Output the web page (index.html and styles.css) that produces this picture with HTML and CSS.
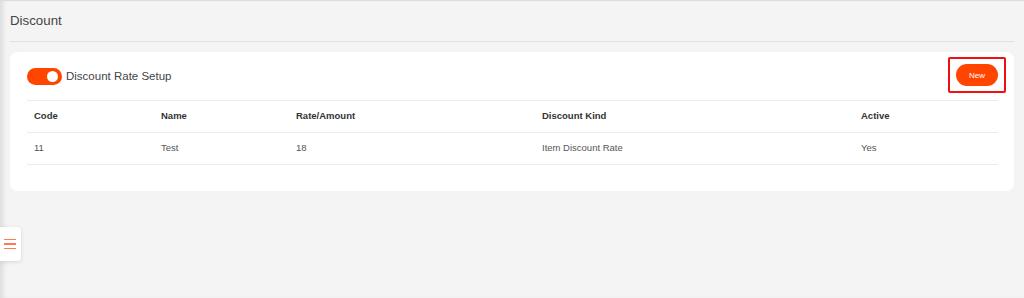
FILE: index.html
```html
<!DOCTYPE html>
<html lang="en">
<head>
  <meta charset="UTF-8">
  <title>Discount</title>
  <link rel="stylesheet" href="styles.css">
</head>
<body>

  <!-- PAGE HEADER -->
  <div class="main">
    <div class="page-title">Discount</div>

    <!-- DISCOUNT CARD -->
    <div class="card">
      <div class="card-head">
        <div class="card-title">
          <span class="toggle"><span class="knob"></span></span>
          Discount Rate Setup
        </div>
        <div class="highlight">
          <button class="btn-new">New</button>
        </div>
      </div>

      <table class="grid">
        <colgroup>
          <col class="c-code">
          <col class="c-name">
          <col class="c-rate">
          <col class="c-kind">
          <col>
        </colgroup>
        <thead>
          <tr>
            <th>Code</th>
            <th>Name</th>
            <th>Rate/Amount</th>
            <th>Discount Kind</th>
            <th>Active</th>
          </tr>
        </thead>
        <tbody>
          <tr>
            <td>11</td>
            <td>Test</td>
            <td>18</td>
            <td>Item Discount Rate</td>
            <td>Yes</td>
          </tr>
        </tbody>
      </table>
    </div>
  </div>

  <!-- SIDE MENU TAB -->
  <div class="menu-tab">
    <span></span><span></span><span></span>
  </div>

</body>
</html>
```

FILE: styles.css
```css
:root {
  --bg-color: #f4f4f4;
  --line-color: #ebebeb;
  --accent-color: #ff4500;
  --text-color: #333;
}
html, body {
  height: 100%;
}
body {
  font-family: 'Liberation Sans', Arial, sans-serif;
  margin: 0;
  background: var(--bg-color);
  color: var(--text-color);
  border-top: 1px solid #dcdcdc;
  box-sizing: border-box;
  box-shadow: inset 6px 0 6px -4px rgba(0, 0, 0, 0.12);
}
.main {
  padding: 0 10px;
}
.page-title {
  height: 40px;
  line-height: 40px;
  font-size: 13.3px;
  color: #444;
  border-bottom: 1px solid #e2e2e2;
}
.card {
  margin-top: 10px;
  background: #fff;
  border-radius: 8px;
  padding: 0 16px 26px 17px;
}
.card-head {
  display: flex;
  align-items: center;
  justify-content: space-between;
  padding-top: 6px;
  height: 34px;
}
.card-title {
  display: flex;
  align-items: center;
  gap: 4px;
  font-size: 11.5px;
  color: #444;
  padding-top: 2px;
}
.toggle {
  display: inline-flex;
  align-items: center;
  justify-content: flex-end;
  width: 35px;
  height: 17px;
  border-radius: 9px;
  background: var(--accent-color);
  padding-right: 4px;
  box-sizing: border-box;
}
.knob {
  width: 11px;
  height: 11px;
  border-radius: 50%;
  background: #fff;
}
.highlight {
  border: 2px solid #f01010;
  border-radius: 2px;
  padding: 5px 6px;
  margin-right: -8px;
}
.btn-new {
  display: block;
  width: 42px;
  height: 22px;
  border: none;
  border-radius: 11px;
  background: var(--accent-color);
  color: #fff;
  font-family: inherit;
  font-size: 8px;
  padding: 0;
  cursor: pointer;
}
.grid {
  width: 100%;
  margin-top: 8px;
  border-collapse: collapse;
  font-size: 9.5px;
}
.c-code { width: 127px; }
.c-name { width: 135px; }
.c-rate { width: 246px; }
.c-kind { width: 319px; }
.grid th,
.grid td {
  height: 29px;
  padding: 0 7px 2px;
  text-align: left;
  border-top: 1px solid var(--line-color);
}
.grid th {
  font-weight: bold;
  color: #333;
}
.grid td {
  color: #555;
  border-bottom: 1px solid var(--line-color);
}
.menu-tab {
  position: absolute;
  left: 0;
  top: 227px;
  width: 21px;
  height: 34px;
  background: #fff;
  border-radius: 0 4px 4px 0;
  box-shadow: 0 1px 4px rgba(0, 0, 0, 0.12);
  display: flex;
  flex-direction: column;
  justify-content: center;
  gap: 3px;
  padding-left: 4px;
  box-sizing: border-box;
}
.menu-tab span {
  display: block;
  width: 12px;
  height: 1.5px;
  background: #ff7a50;
}
```
